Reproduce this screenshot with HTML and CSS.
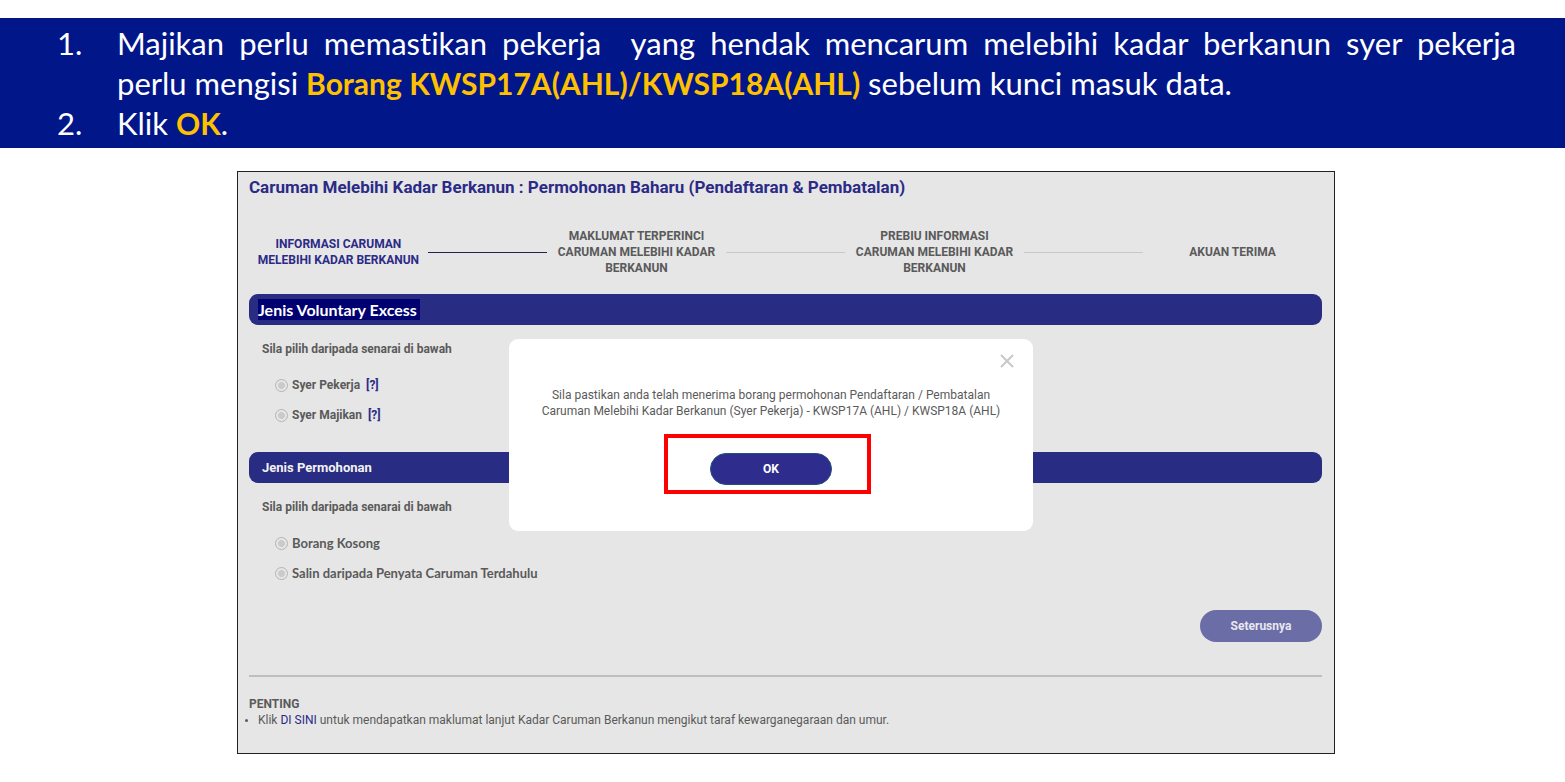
FILE: index.html
```html
<!DOCTYPE html>
<html lang="ms">
<head>
    <meta charset="UTF-8">
    <meta name="viewport" content="width=device-width, initial-scale=1.0">
    <title>Caruman Melebihi Kadar Berkanun</title>
    <link rel="stylesheet" href="styles.css">
</head>
<body>
    <ol class="instructions">
        <li>Majikan perlu memastikan pekerja&nbsp; yang hendak mencarum melebihi kadar berkanun syer pekerja perlu&nbsp;mengisi <strong>Borang KWSP17A(AHL)/KWSP18A(AHL)</strong> sebelum kunci masuk data.</li>
        <li>Klik <strong>OK</strong>.</li>
    </ol>

    <main class="panel">
        <h1>Caruman Melebihi Kadar Berkanun : Permohonan Baharu (Pendaftaran &amp; Pembatalan)</h1>

        <div class="steps">
            <div class="step active">INFORMASI CARUMAN<br>MELEBIHI KADAR BERKANUN</div>
            <div class="step-line active"></div>
            <div class="step">MAKLUMAT TERPERINCI<br>CARUMAN MELEBIHI KADAR<br>BERKANUN</div>
            <div class="step-line"></div>
            <div class="step">PREBIU INFORMASI<br>CARUMAN MELEBIHI KADAR<br>BERKANUN</div>
            <div class="step-line"></div>
            <div class="step">AKUAN TERIMA</div>
        </div>

        <form>
            <h2 class="section-title relabelled"><span>Jenis Voluntary Excess</span></h2>
            <fieldset>
                <legend>Sila pilih daripada senarai di bawah</legend>
                <div class="option">
                    <input type="radio" name="jenis" id="syer-pekerja">
                    <label for="syer-pekerja">Syer Pekerja</label>
                    <a href="#">[?]</a>
                </div>
                <div class="option">
                    <input type="radio" name="jenis" id="syer-majikan">
                    <label for="syer-majikan">Syer Majikan</label>
                    <a href="#">[?]</a>
                </div>
            </fieldset>

            <h2 class="section-title">Jenis Permohonan</h2>
            <fieldset class="alt">
                <legend>Sila pilih daripada senarai di bawah</legend>
                <div class="option">
                    <input type="radio" name="permohonan" id="kosong">
                    <label for="kosong">Borang Kosong</label>
                </div>
                <div class="option">
                    <input type="radio" name="permohonan" id="salin">
                    <label for="salin">Salin daripada Penyata Caruman Terdahulu</label>
                </div>
            </fieldset>

            <div class="actions">
                <button type="button" class="next">Seterusnya</button>
            </div>
        </form>

        <div class="notes">
            <h3>PENTING</h3>
            <ul>
                <li>Klik <a href="#">DI SINI</a> untuk mendapatkan maklumat lanjut Kadar Caruman Berkanun mengikut taraf kewarganegaraan dan umur.</li>
            </ul>
        </div>

        <div class="dialog" role="dialog">
            <button type="button" class="close" aria-label="Tutup">
                <svg width="14" height="14" viewBox="0 0 14 14">
                    <path d="M1 1L13 13M13 1L1 13" stroke="#c8c8c8" stroke-width="2" fill="none"/>
                </svg>
            </button>
            <p>Sila pastikan anda telah menerima borang permohonan Pendaftaran / Pembatalan<br>Caruman Melebihi Kadar Berkanun (Syer Pekerja) - KWSP17A (AHL) / KWSP18A (AHL)</p>
            <button type="button" class="ok">OK</button>
            <div class="highlight"></div>
        </div>
    </main>
</body>
</html>
```
FILE: styles.css
```css
* {
    box-sizing: border-box;
}

body {
    margin: 0;
    padding: 18px 0;
    background: #fff;
    color: #5a5a5a;
    font-family: Roboto, "Liberation Sans", sans-serif;
    font-size: 12px;
    line-height: 16px;
}

h1, h2, h3, p, ul, ol, fieldset {
    margin: 0;
    padding: 0;
}

a {
    color: #2b2b86;
    text-decoration: none;
}

.instructions {
    padding: 5px 49px 5px 117px;
    background: #001689;
    color: #fff;
    font-family: Lato, sans-serif;
    font-size: 31px;
    font-variant-ligatures: none;
    line-height: 40px;
    text-align: justify;
    list-style: none;
    counter-reset: item;
}

.instructions li {
    counter-increment: item;
}

.instructions li::before {
    content: counter(item) ".";
    float: left;
    width: 60px;
    margin-left: -60px;
}

.instructions strong {
    color: #ffc000;
    font-size: 30px;
    line-height: 30px;
}

.panel {
    position: relative;
    margin: 23px 230px 0 237px;
    padding: 5px 12px 25px 11px;
    border: 1px solid #222;
    background: #e6e6e6;
}

h1 {
    color: #2b2b86;
    font-size: 17px;
    line-height: 20px;
}

.steps {
    display: grid;
    grid-template-columns: 3fr 2fr 3fr 2fr 3fr 2fr 3fr;
    align-items: center;
    margin: 31px 0 18px;
    text-align: center;
    font-weight: bold;
}

.step.active {
    color: #2b2b86;
}

.step-line {
    border-top: 1px solid #c8c8c8;
}

.step-line.active {
    border-color: #22224f;
}

.section-title {
    height: 31px;
    padding: 0 13px;
    border-radius: 9px;
    background: #282c82;
    color: #f2f2f2;
    font-size: 13px;
    line-height: 31px;
}

.relabelled {
    display: flex;
    align-items: center;
    padding: 0 9px;
}

.relabelled span {
    padding-right: 3px;
    background: #000070;
    color: #fff;
    font-family: Lato, sans-serif;
    font-size: 16px;
    line-height: 21px;
}

fieldset {
    height: 127px;
    padding: 16px 13px 0;
    border: 0;
    font-weight: bold;
}

legend {
    float: left;
    width: 100%;
    margin-bottom: 13px;
    padding: 0;
}

.option {
    display: flex;
    clear: both;
    align-items: center;
    height: 30px;
    padding-left: 13px;
}

.option input {
    appearance: none;
    width: 13px;
    height: 13px;
    margin: 0 4px 0 0;
    border: 1px solid #b4b4b4;
    border-radius: 50%;
    background: radial-gradient(circle, #cacaca 3px, #e6e6e6 4px);
}

.option a {
    margin-left: 6px;
}

.alt label {
    font-family: Lato, sans-serif;
    font-size: 13px;
}

.actions {
    display: flex;
    justify-content: flex-end;
    padding-bottom: 33px;
    border-bottom: 2px solid #bdbebe;
}

button {
    border: 0;
    padding: 0;
    font-family: inherit;
    font-size: 12px;
    font-weight: bold;
}

.next, .ok {
    width: 122px;
    height: 32px;
    border-radius: 16px;
    color: #fff;
}

.next {
    background: #6b6da7;
    color: #e8e8ee;
}

.notes {
    margin-top: 19px;
}

.notes h3 {
    font-size: 12px;
}

.notes ul {
    padding-left: 9px;
}

.notes li::marker {
    font-size: 10px;
}

.dialog {
    position: absolute;
    top: 167px;
    left: 271px;
    width: 524px;
    height: 192px;
    padding-top: 48px;
    border-radius: 9px;
    background: #fff;
    text-align: center;
}

.close {
    position: absolute;
    top: 15px;
    right: 19px;
    height: 14px;
    background: none;
    line-height: 0;
}

.ok {
    margin-top: 34px;
    border: 1px solid #23527c;
    background: #2e2d8d;
}

/* red frame round the OK button */
.highlight {
    position: absolute;
    top: 95px;
    left: 155px;
    width: 207px;
    height: 60px;
    border: 4px solid #fe0000;
    pointer-events: none;
}
```
